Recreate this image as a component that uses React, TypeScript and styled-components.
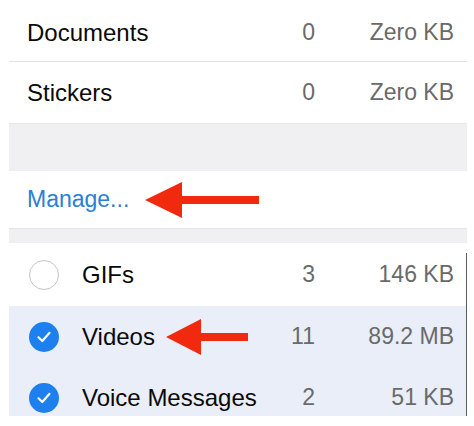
import React from 'react';
import styled, { createGlobalStyle } from 'styled-components';

const GlobalStyle = createGlobalStyle`
  html, body {
    margin: 0;
    padding: 0;
    background: #fff;
  }
  body {
    font-family: 'Liberation Sans', Arial, sans-serif;
    -webkit-font-smoothing: antialiased;
  }
`;

const topRows = [
  { label: 'Documents', count: '0', size: 'Zero KB' },
  { label: 'Stickers', count: '0', size: 'Zero KB' },
];

const mediaRows = [
  { label: 'GIFs', count: '3', size: '146 KB', checked: false, arrow: false },
  { label: 'Videos', count: '11', size: '89.2 MB', checked: true, arrow: true },
  { label: 'Voice Messages', count: '2', size: '51 KB', checked: true, arrow: false },
];

const Arrow = ({ width, height, head }: { width: number; height: number; head: number }) => {
  const mid = height / 2;
  const t = 4;
  return (
    <svg width={width} height={height} viewBox={`0 0 ${width} ${height}`}>
      <polygon
        fill="#f0290f"
        points={`0,${mid} ${head},0 ${head},${mid - t} ${width},${mid - t} ${width},${mid + t} ${head},${mid + t} ${head},${height}`}
      />
    </svg>
  );
};

const Check = ({ checked }: { checked: boolean }) => (
  <CheckCircle $checked={checked}>
    {checked && (
      <svg width="16" height="16" viewBox="0 0 16 16">
        <path
          d="M2.5 8.3 L6.3 12 L13.5 3.8"
          fill="none"
          stroke="#fff"
          strokeWidth="2.2"
          strokeLinecap="round"
          strokeLinejoin="round"
        />
      </svg>
    )}
  </CheckCircle>
);

export default function App() {
  return (
    <>
      <GlobalStyle />
      <Panel>
        <Group>
          {topRows.map((row, i) => (
            <Row key={row.label} $divider={i < topRows.length - 1}>
              <Label>{row.label}</Label>
              <Count>{row.count}</Count>
              <Size>{row.size}</Size>
            </Row>
          ))}
        </Group>
        <Spacer $height={48} />
        <ManageRow>
          <ManageLink>Manage...</ManageLink>
          <Arrow width={114} height={36} head={37} />
        </ManageRow>
        <Spacer $height={15} />
        <MediaList>
          {mediaRows.map((row) => (
            <MediaRow key={row.label} $selected={row.checked}>
              <Check checked={row.checked} />
              <Label>
                {row.label}
                {row.arrow && <Arrow width={82} height={36} head={35} />}
              </Label>
              <Count>{row.count}</Count>
              <Size>{row.size}</Size>
            </MediaRow>
          ))}
        </MediaList>
      </Panel>
    </>
  );
}

const Panel = styled.div`
  width: 458px;
  margin-left: 9px;
  display: flex;
  flex-direction: column;
`;

const Group = styled.div`
  display: flex;
  flex-direction: column;
  background: #fff;
`;

const Row = styled.div<{ $divider?: boolean }>`
  display: grid;
  grid-template-columns: 1fr auto 139px;
  align-items: center;
  height: 61px;
  box-sizing: border-box;
  padding: 0 13px 0 18px;
  border-bottom: ${(p) => (p.$divider ? '1px solid #e3e3e6' : 'none')};
  &:first-child {
    height: 62px;
    padding-top: 4px;
  }
`;

const Label = styled.span`
  display: flex;
  align-items: center;
  gap: 11px;
  font-size: 24px;
  color: #0a0a0a;
  white-space: nowrap;
`;

const Count = styled.span`
  font-size: 23px;
  color: #6a6a6a;
  text-align: right;
`;

const Size = styled.span`
  font-size: 23px;
  color: #6a6a6a;
  text-align: right;
`;

const Spacer = styled.div<{ $height: number }>`
  height: ${(p) => p.$height}px;
  background: #f0f0f2;
  border-top: 1px solid #e6e6e9;
  box-sizing: border-box;
`;

const ManageRow = styled.div`
  display: flex;
  align-items: center;
  gap: 16px;
  height: 57px;
  padding: 0 18px;
  background: #fff;
`;

const ManageLink = styled.span`
  font-size: 23px;
  color: #2a80d2;
`;

const MediaList = styled.div`
  position: relative;
  display: flex;
  flex-direction: column;
  height: 173px;
  overflow: hidden;
  &::after {
    content: '';
    position: absolute;
    right: 0;
    top: 10px;
    bottom: 0;
    width: 1px;
    background: #5a5a5a;
  }
`;

const MediaRow = styled.div<{ $selected: boolean }>`
  display: grid;
  grid-template-columns: 30px 1fr auto 139px;
  column-gap: 23px;
  align-items: center;
  flex: 0 0 61px;
  padding: 0 13px 0 20px;
  background: ${(p) => (p.$selected ? '#e9eef8' : '#fff')};
  &:first-child {
    flex-basis: 63px;
  }
  & > ${Count} {
    margin-right: -23px;
  }
`;

const CheckCircle = styled.span<{ $checked: boolean }>`
  display: flex;
  align-items: center;
  justify-content: center;
  width: 30px;
  height: 30px;
  border-radius: 50%;
  box-sizing: border-box;
  background: ${(p) => (p.$checked ? '#1d80ee' : '#fff')};
  border: ${(p) => (p.$checked ? 'none' : '1.5px solid #c4c4c8')};
`;
